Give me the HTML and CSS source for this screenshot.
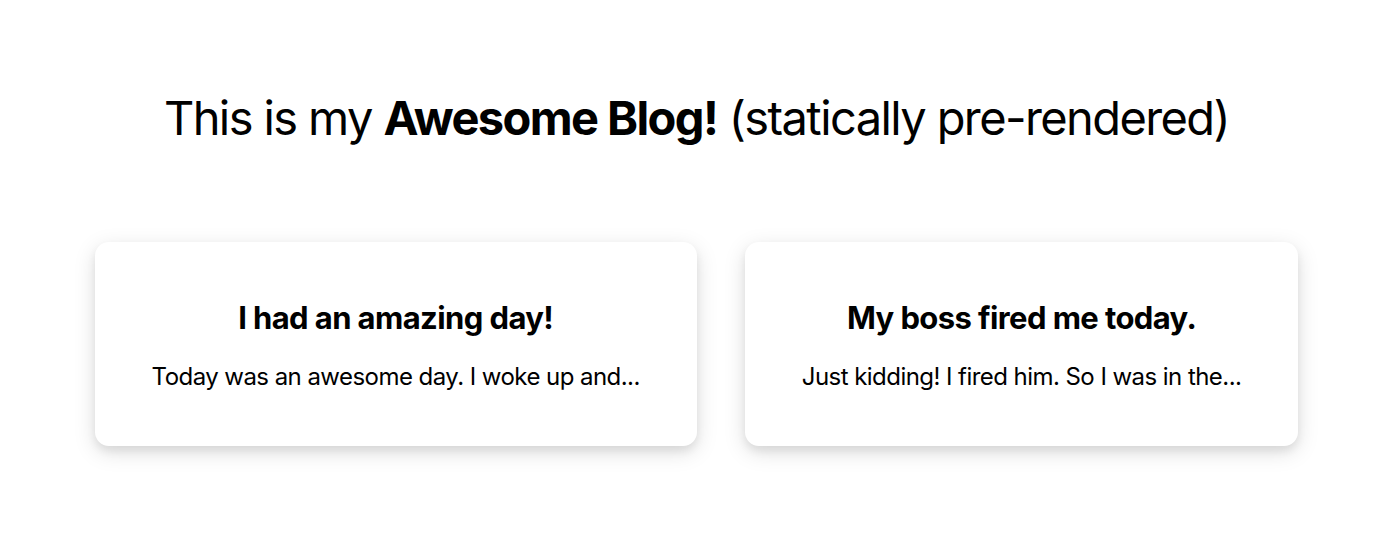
FILE: index.html
```html
<!DOCTYPE html>
<html lang="en">
<head>
<meta charset="utf-8">
<title>Awesome Blog</title>
<link rel="stylesheet" href="styles.css">
</head>
<body>
<main class="page">
  <h1 class="title">This is my <strong>Awesome Blog!</strong> (statically pre-rendered)</h1>
  <section class="posts">
    <article class="card">
      <h2 class="card-title">I had an amazing day!</h2>
      <p class="card-text">Today was an awesome day. I woke up and...</p>
    </article>
    <article class="card">
      <h2 class="card-title">My boss fired me today.</h2>
      <p class="card-text">Just kidding! I fired him. So I was in the...</p>
    </article>
  </section>
</main>
</body>
</html>
```
FILE: styles.css
```css
html, body {
  margin: 0;
  padding: 0;
  background: #fff;
}
body {
  font-family: Inter, "Noto Sans", sans-serif;
  color: #000;
  min-height: 545px;
}
.page {
  display: flex;
  flex-direction: column;
  align-items: center;
  padding: 88px 7px 60px 0;
}
.title {
  margin: 0;
  font-size: 47px;
  font-weight: 400;
  line-height: 60px;
  letter-spacing: -1.6px;
}
.title strong {
  font-weight: 700;
}
.posts {
  display: flex;
  justify-content: center;
  gap: 48px;
  margin-top: 94px;
}
.card {
  background: #fff;
  border-radius: 14px;
  box-shadow: 0 6px 22px rgba(0, 0, 0, 0.13), 0 5px 8px rgba(0, 0, 0, 0.07);
  padding: 56px 57px 54px;
  text-align: center;
}
.card-title {
  margin: 0;
  font-size: 31px;
  font-weight: 700;
  line-height: 40px;
  letter-spacing: -0.6px;
}
.card-text {
  margin: 24px 0 0;
  font-size: 24px;
  line-height: 30px;
  letter-spacing: -0.55px;
}
```
